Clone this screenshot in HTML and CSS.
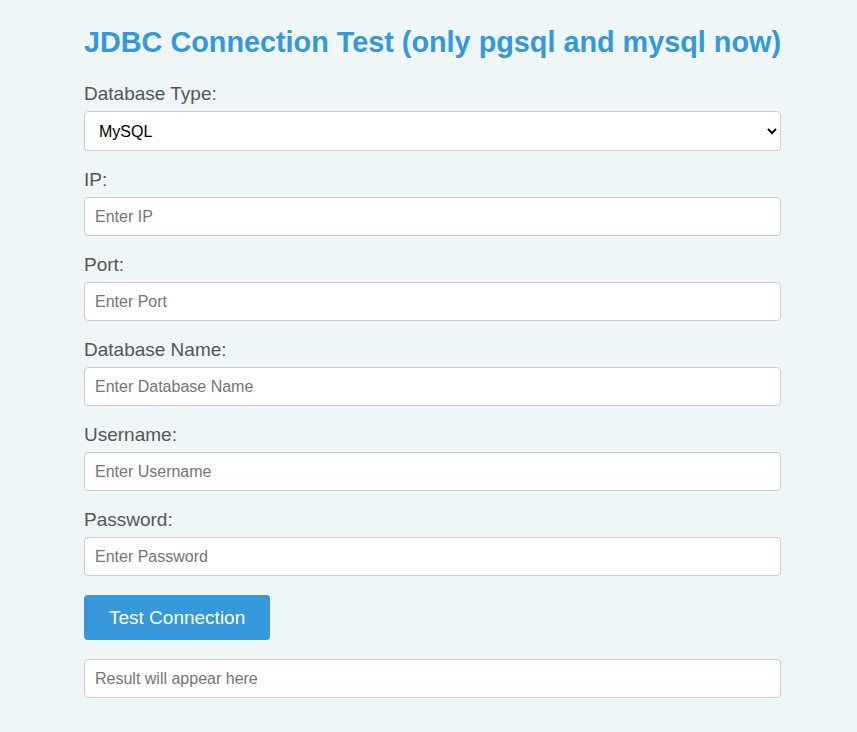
FILE: index.html
```html
<!DOCTYPE html>
<html>
<head>
<meta charset="utf-8">
<title>JDBC Connection Test</title>
<link rel="stylesheet" href="styles.css">
</head>
<body>
<div class="container">
  <h1 class="title">JDBC Connection Test (only pgsql and mysql now)</h1>
  <label class="label" for="dbType">Database Type:</label>
  <select class="field select" id="dbType">
    <option>MySQL</option>
    <option>PostgreSQL</option>
  </select>
  <label class="label" for="ip">IP:</label>
  <input class="field" id="ip" type="text" placeholder="Enter IP">
  <label class="label" for="port">Port:</label>
  <input class="field" id="port" type="text" placeholder="Enter Port">
  <label class="label" for="dbName">Database Name:</label>
  <input class="field" id="dbName" type="text" placeholder="Enter Database Name">
  <label class="label" for="user">Username:</label>
  <input class="field" id="user" type="text" placeholder="Enter Username">
  <label class="label" for="pass">Password:</label>
  <input class="field" id="pass" type="password" placeholder="Enter Password">
  <button class="btn" type="button">Test Connection</button>
  <input class="field result" type="text" placeholder="Result will appear here" readonly>
</div>
</body>
</html>
```

FILE: styles.css
```css
html, body {
  margin: 0;
  padding: 0;
  background: #eef6f8;
  font-family: "Liberation Sans", Arial, sans-serif;
}
.container {
  width: 697px;
  margin-left: 84px;
  padding-top: 26px;
  display: flex;
  flex-direction: column;
  align-items: flex-start;
}
.title {
  margin: 0 0 25px 0;
  font-size: 28.8px;
  line-height: 32px;
  font-weight: bold;
  color: #3498db;
  white-space: nowrap;
}
.label {
  display: block;
  font-size: 19px;
  line-height: 21px;
  color: #555555;
  margin-bottom: 7px;
}
.field {
  box-sizing: border-box;
  width: 100%;
  height: 39px;
  padding: 0 10px;
  border: 1px solid #cccccc;
  border-radius: 4px;
  background: #ffffff;
  font-family: "Liberation Sans", Arial, sans-serif;
  font-size: 16px;
  color: #000;
  margin: 0 0 18px 0;
  outline: none;
}
.field::placeholder {
  color: #757575;
}
.select {
  height: 40px;
  padding: 0 8px 0 10px;
}
.btn {
  margin-top: 1px;
  height: 45px;
  padding: 0 25px;
  border: none;
  border-radius: 4px;
  background: #3498db;
  color: #ffffff;
  font-family: "Liberation Sans", Arial, sans-serif;
  font-size: 19px;
  cursor: pointer;
}
.result {
  margin-top: 19px;
}
```
